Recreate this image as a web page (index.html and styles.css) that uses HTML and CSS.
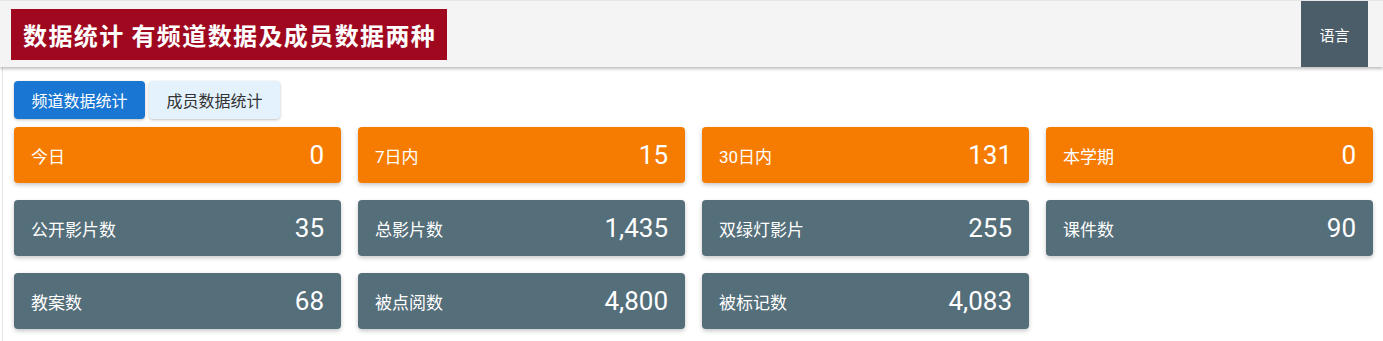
FILE: index.html
```html
<!DOCTYPE html>
<html lang="zh">
<head>
<meta charset="utf-8">
<link rel="stylesheet" href="styles.css">
</head>
<body>
<header class="topbar">
  <h1 class="title">数据统计 有频道数据及成员数据两种</h1>
  <button class="lang">语言</button>
</header>
<main class="panel">
  <div class="tabs">
    <button class="tab active">频道数据统计</button>
    <button class="tab">成员数据统计</button>
  </div>
  <div class="grid">
    <div class="card orange"><span class="label">今日</span><span class="num">0</span></div>
    <div class="card orange"><span class="label">7日内</span><span class="num">15</span></div>
    <div class="card orange"><span class="label">30日内</span><span class="num">131</span></div>
    <div class="card orange"><span class="label">本学期</span><span class="num">0</span></div>
    <div class="card slate"><span class="label">公开影片数</span><span class="num">35</span></div>
    <div class="card slate"><span class="label">总影片数</span><span class="num">1,435</span></div>
    <div class="card slate"><span class="label">双绿灯影片</span><span class="num">255</span></div>
    <div class="card slate"><span class="label">课件数</span><span class="num">90</span></div>
    <div class="card slate"><span class="label">教案数</span><span class="num">68</span></div>
    <div class="card slate"><span class="label">被点阅数</span><span class="num">4,800</span></div>
    <div class="card slate"><span class="label">被标记数</span><span class="num">4,083</span></div>
  </div>
</main>
</body>
</html>
```
FILE: styles.css
```css
* { box-sizing: border-box; }
html, body { margin: 0; padding: 0; background: #fff; }
body {
  font-family: Roboto, "Noto Sans CJK SC", "Noto Sans", sans-serif;
  width: 1383px;
  height: 341px;
  overflow: hidden;
}
.topbar {
  position: relative;
  z-index: 2;
  height: 67px;
  background: #f4f4f4;
  border-top: 1px solid #e6e6e6;
  box-shadow: 0 2px 3px rgba(0,0,0,0.25);
  display: flex;
  align-items: flex-start;
  justify-content: space-between;
  padding: 0 15px 0 11px;
}
.title {
  margin: 8px 0 0 0;
  height: 51px;
  padding: 0 11px 0 12px;
  background: #a0081f;
  color: #fff;
  font-family: "Noto Sans CJK SC", sans-serif;
  font-weight: 700;
  font-size: 24px;
  letter-spacing: 1.4px;
  line-height: 51px;
  white-space: nowrap;
}
.lang {
  margin: 0;
  width: 67px;
  height: 66px;
  border: 0;
  background: #4a5d68;
  color: #fff;
  font-family: "Noto Sans CJK SC", sans-serif;
  font-size: 15px;
  padding: 0;
}
.panel {
  margin-left: 2px;
  border-left: 1px solid #e4e4e4;
  padding: 14px 0 0 11px;
  height: 274px;
}
.tabs {
  display: flex;
  gap: 4px;
}
.tab {
  width: 131px;
  height: 38px;
  border: 0;
  border-radius: 4px;
  background: #e3f2fd;
  color: #333;
  font-family: "Noto Sans CJK SC", sans-serif;
  font-size: 16px;
  padding: 0;
  box-shadow: 0 1px 3px rgba(0,0,0,0.25);
}
.tab.active {
  background: #1976d2;
  color: #fff;
}
.grid {
  margin-top: 8px;
  display: grid;
  grid-template-columns: repeat(4, 327px);
  column-gap: 17px;
  row-gap: 17px;
}
.card {
  height: 56px;
  border-radius: 4px;
  display: flex;
  align-items: center;
  justify-content: space-between;
  padding: 0 17px;
  color: #fff;
  box-shadow: 0 2px 4px rgba(0,0,0,0.22);
}
.card.orange { background: #f57c00; }
.card.slate { background: #546e7a; }
.label {
  font-family: Roboto, "Noto Sans CJK SC", sans-serif;
  font-size: 17px;
}
.num {
  font-family: Roboto, sans-serif;
  font-size: 26px;
  line-height: 1;
}
```
